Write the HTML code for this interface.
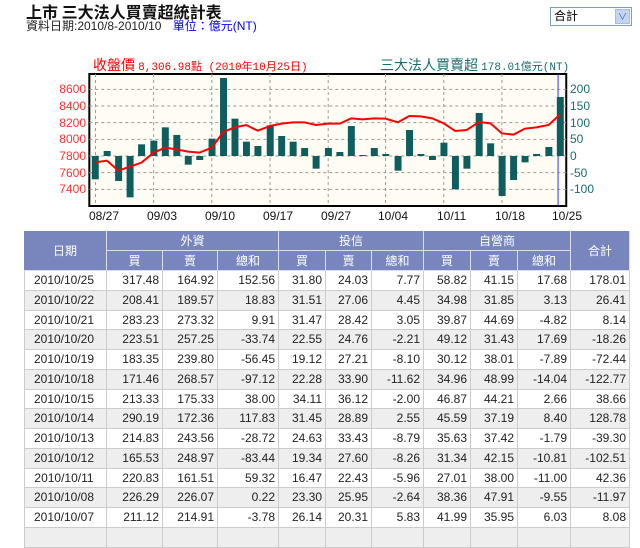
<!DOCTYPE html>
<html><head><meta charset="utf-8"><style>
*{margin:0;padding:0;box-sizing:border-box}
body{width:640px;height:532px;overflow:hidden;background:#fff;position:relative;font-family:"Liberation Sans","Noto Sans CJK TC",sans-serif;}
.a{position:absolute;white-space:nowrap}
.c{position:absolute;font-size:12px;line-height:19px;text-align:right;padding-right:3px;color:#222;border-right:1px solid #ccc;border-bottom:1px solid #ccc;font-family:"Liberation Sans Narrow","Liberation Sans",sans-serif}
.h{position:absolute;background:#7886bd;color:#fff;font-size:12px;text-align:center;border-right:1px solid #dde;border-bottom:1px solid #dde}
.ll{position:absolute;font-size:12px;color:#f33;text-align:right;width:30px;left:56px}
.rl{position:absolute;font-size:12px;color:#1a6d6d;left:570px}
.xl{position:absolute;font-size:12px;color:#111;top:209px}
</style></head><body>
<div class="a" style="left:26px;top:2px;font-size:16px;font-weight:bold;color:#111;font-family:'Noto Sans CJK TC',sans-serif;line-height:18px">上市 三大法人買賣超統計表</div>
<div class="a" style="left:26px;top:19px;font-size:12px;color:#222;line-height:14px">資料日期:2010/8-2010/10 <span style="color:#00f;margin-left:8px">單位：億元(NT)</span></div>
<div class="a" style="left:550px;top:7px;width:82px;height:19px;border:1px solid #7f9db9;font-size:12px;line-height:17px;padding-left:3px;background:#fff">合計<div style="position:absolute;right:1px;top:1px;width:15px;height:15px;background:#c4d4f4;border:1px solid #a8bde6;color:#4d6185;font-size:9px;text-align:center;line-height:14px">&#8744;</div></div>

<div class="a" style="left:93px;top:57px;font-size:14px;color:#f00;line-height:16px;font-family:'Noto Sans CJK TC',sans-serif">收盤價 <span style="font-family:'Liberation Mono',monospace;font-size:11px">8,306.98點 (2010年10月25日)</span></div>
<div class="a" style="left:380px;top:57px;font-size:14px;color:#1a6d6d;line-height:16px;font-family:'Noto Sans CJK TC',sans-serif">三大法人買賣超 <span style="font-family:'Liberation Mono',monospace;font-size:11px">178.01億元(NT)</span></div>

<svg class="a" style="left:0;top:0" width="640" height="230" viewBox="0 0 1562 690" preserveAspectRatio="none">
<rect x="218" y="222" width="1164" height="396" fill="#fffcf4" stroke="#000" stroke-width="2" vector-effect="non-scaling-stroke"/>
<g stroke="#999" stroke-dasharray="3,3" fill="none">
<path d="M218 268H1382M218 318H1382M218 368H1382M218 418H1382M218 468H1382M218 518H1382M218 568H1382" vector-effect="non-scaling-stroke"/>
<path d="M233 222V618M375 222V618M517 222V618M659 222V618M801 222V618M941 222V618M1083 222V618M1225 222V618" vector-effect="non-scaling-stroke"/>
</g>
<path d="M1362 222V618" stroke="#33f" vector-effect="non-scaling-stroke"/>
<g fill="#0e5e5e">
<rect x="224" y="468" width="17" height="70"/><rect x="253" y="453" width="17" height="15"/><rect x="281" y="468" width="17" height="75"/><rect x="309" y="468" width="17" height="124"/><rect x="337" y="433" width="17" height="35"/><rect x="367" y="422" width="17" height="46"/><rect x="395" y="382" width="17" height="86"/><rect x="423" y="405" width="17" height="63"/><rect x="451" y="468" width="17" height="26"/><rect x="479" y="468" width="17" height="12"/><rect x="509" y="416" width="17" height="52"/><rect x="537" y="234" width="17" height="234"/><rect x="565" y="356" width="17" height="112"/><rect x="593" y="425" width="17" height="43"/><rect x="621" y="438" width="17" height="30"/><rect x="651" y="376" width="17" height="92"/><rect x="679" y="408" width="17" height="60"/><rect x="707" y="425" width="17" height="43"/><rect x="735" y="444" width="17" height="24"/><rect x="763" y="468" width="17" height="38"/><rect x="793" y="444" width="17" height="24"/><rect x="821" y="456" width="17" height="12"/><rect x="849" y="378" width="17" height="90"/><rect x="877" y="465" width="17" height="3"/><rect x="905" y="444" width="17" height="24"/><rect x="933" y="462" width="17" height="6"/><rect x="963" y="468" width="17" height="44"/><rect x="991" y="390" width="17" height="78"/><rect x="1019" y="462" width="17" height="6"/><rect x="1047" y="468" width="17" height="12"/><rect x="1075" y="428" width="17" height="40"/><rect x="1103" y="468" width="17" height="100"/><rect x="1131" y="468" width="17" height="38"/><rect x="1161" y="339" width="17" height="129"/><rect x="1189" y="430" width="17" height="38"/><rect x="1217" y="468" width="17" height="120"/><rect x="1245" y="468" width="17" height="72"/><rect x="1273" y="468" width="17" height="19"/><rect x="1301" y="462" width="17" height="6"/><rect x="1331" y="441" width="17" height="27"/><rect x="1359" y="291" width="17" height="177"/>
</g>
<polyline fill="none" stroke="#f00" stroke-width="2" vector-effect="non-scaling-stroke" points="233,487 261,482 289,512 317,500 345,488 375,458 403,443 431,448 459,455 487,458 517,443 545,396 573,382 601,375 629,392 659,378 687,371 715,367 743,367 771,375 801,371 829,371 857,355 885,358 913,355 941,356 971,367 999,348 1027,349 1055,355 1083,370 1111,393 1139,390 1169,366 1197,370 1225,400 1253,404 1281,386 1309,382 1339,375 1367,343"/>
</svg>
<div class="ll" style="top:82px">8600</div><div class="ll" style="top:99px">8400</div><div class="ll" style="top:116px">8200</div><div class="ll" style="top:132px">8000</div><div class="ll" style="top:149px">7800</div><div class="ll" style="top:166px">7600</div><div class="ll" style="top:182px">7400</div>
<div class="rl" style="top:82px">200</div><div class="rl" style="top:99px">150</div><div class="rl" style="top:116px">100</div><div class="rl" style="top:132px">50</div><div class="rl" style="top:149px">0</div><div class="rl" style="top:166px">-50</div><div class="rl" style="top:182px">-100</div>
<div class="xl" style="left:89px">08/27</div><div class="xl" style="left:147px">09/03</div><div class="xl" style="left:205px">09/10</div><div class="xl" style="left:263px">09/17</div><div class="xl" style="left:321px">09/27</div><div class="xl" style="left:378px">10/04</div><div class="xl" style="left:437px">10/11</div><div class="xl" style="left:495px">10/18</div><div class="xl" style="left:552px">10/25</div>

<div id="t"></div>
<script>
var X=[24,107,163,218,279,326,372,424,471,518,571,630];
var h='';
function hd(x1,x2,y,hh,t){h+='<div class="h" style="left:'+x1+'px;top:'+y+'px;width:'+(x2-x1)+'px;height:'+hh+'px;line-height:'+hh+'px">'+t+'</div>';}
hd(X[0],X[1],231,40,'日期');hd(X[1],X[4],231,20,'外資');hd(X[4],X[7],231,20,'投信');hd(X[7],X[10],231,20,'自營商');hd(X[10],X[11],231,40,'合計');
var s=['買','賣','總和'];for(var i=1;i<10;i++)hd(X[i],X[i+1],251,20,s[(i-1)%3]);
var D=[
['2010/10/25','317.48','164.92','152.56','31.80','24.03','7.77','58.82','41.15','17.68','178.01'],
['2010/10/22','208.41','189.57','18.83','31.51','27.06','4.45','34.98','31.85','3.13','26.41'],
['2010/10/21','283.23','273.32','9.91','31.47','28.42','3.05','39.87','44.69','-4.82','8.14'],
['2010/10/20','223.51','257.25','-33.74','22.55','24.76','-2.21','49.12','31.43','17.69','-18.26'],
['2010/10/19','183.35','239.80','-56.45','19.12','27.21','-8.10','30.12','38.01','-7.89','-72.44'],
['2010/10/18','171.46','268.57','-97.12','22.28','33.90','-11.62','34.96','48.99','-14.04','-122.77'],
['2010/10/15','213.33','175.33','38.00','34.11','36.12','-2.00','46.87','44.21','2.66','38.66'],
['2010/10/14','290.19','172.36','117.83','31.45','28.89','2.55','45.59','37.19','8.40','128.78'],
['2010/10/13','214.83','243.56','-28.72','24.63','33.43','-8.79','35.63','37.42','-1.79','-39.30'],
['2010/10/12','165.53','248.97','-83.44','19.34','27.60','-8.26','31.34','42.15','-10.81','-102.51'],
['2010/10/11','220.83','161.51','59.32','16.47','22.43','-5.96','27.01','38.00','-11.00','42.36'],
['2010/10/08','226.29','226.07','0.22','23.30','25.95','-2.64','38.36','47.91','-9.55','-11.97'],
['2010/10/07','211.12','214.91','-3.78','26.14','20.31','5.83','41.99','35.95','6.03','8.08'],
['','','','','','','','','','','']];
for(var r=0;r<D.length;r++){var y=271+r*19.75;var bg=r%2?'#eee':'#fff';
for(var c=0;c<11;c++){h+='<div class="c" style="left:'+X[c]+'px;top:'+y+'px;width:'+(X[c+1]-X[c])+'px;height:19.75px;background:'+bg+';'+(c==0?'text-align:center;border-left:1px solid #ccc;':'')+'">'+D[r][c]+'</div>';}}
document.getElementById('t').innerHTML=h;
</script>
</body></html>
